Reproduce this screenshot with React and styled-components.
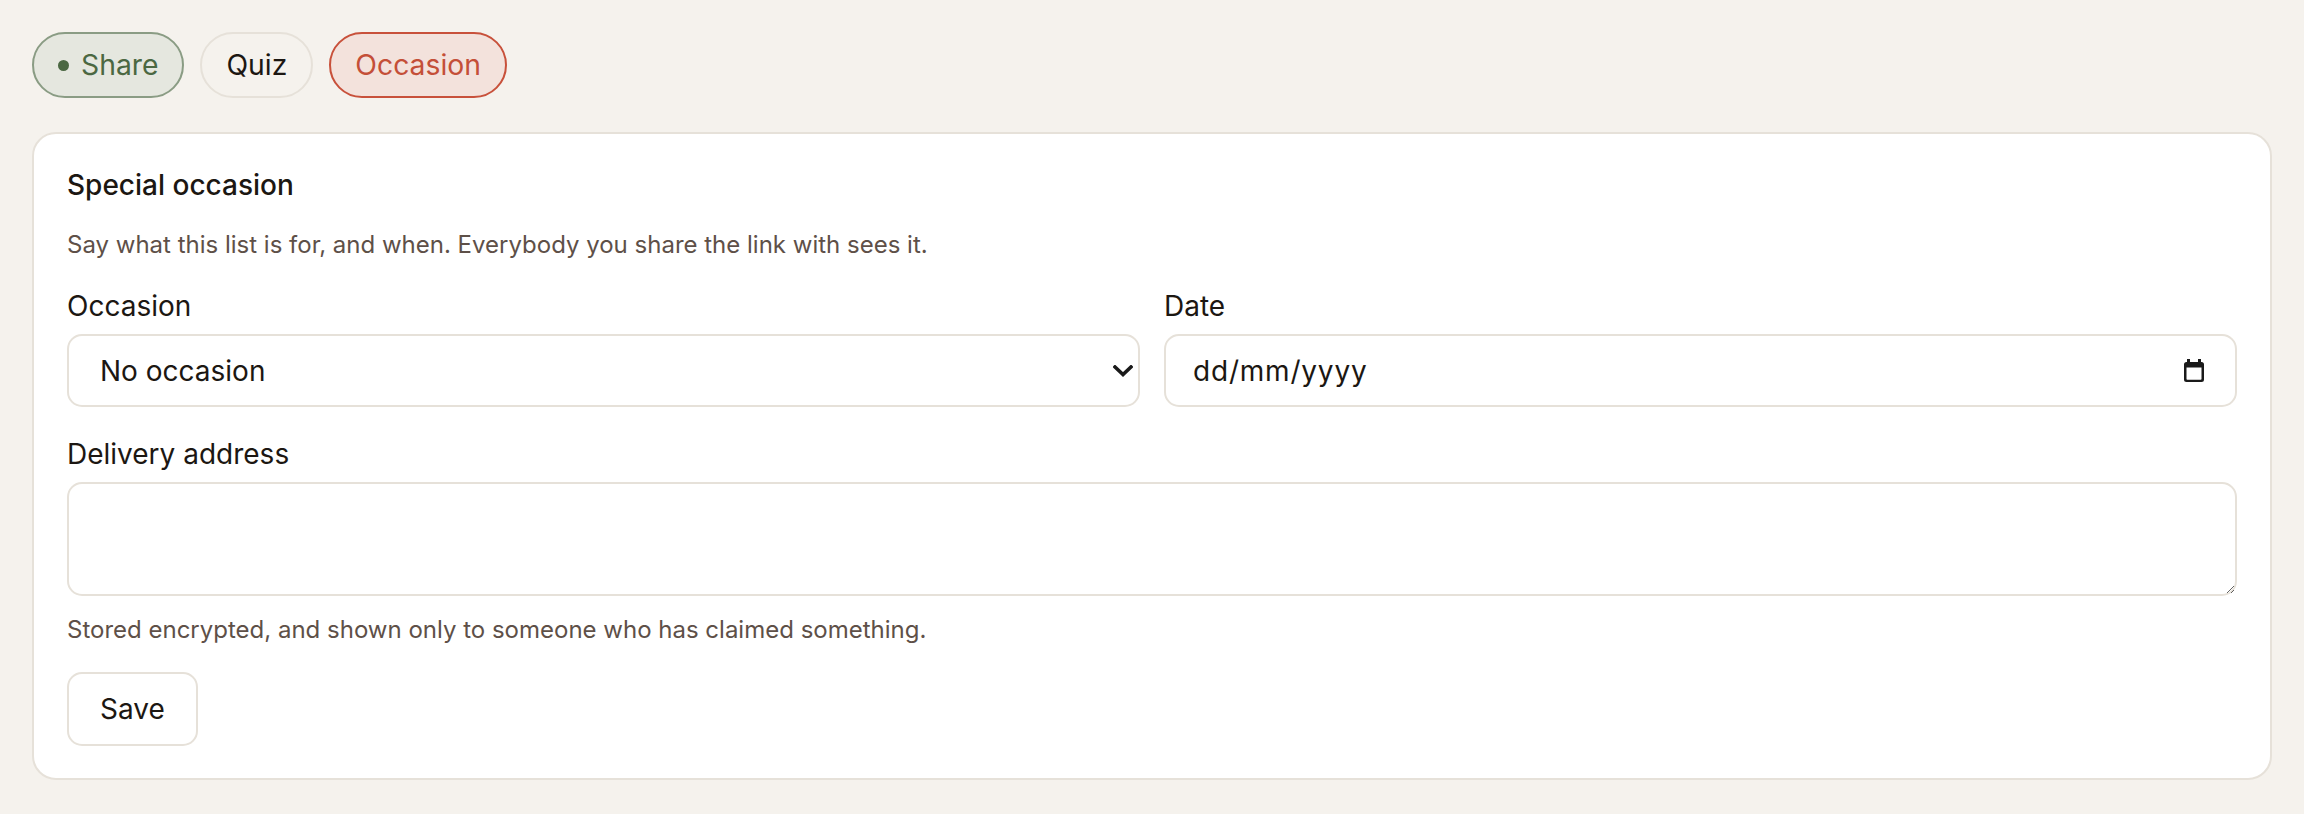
import React, { useState } from "react";
import styled, { createGlobalStyle } from "styled-components";

const GlobalStyle = createGlobalStyle`
  html, body {
    margin: 0;
    padding: 0;
    background: #f5f2ed;
  }
  body {
    font-family: Inter, "Noto Sans", sans-serif;
    color: #1c1712;
  }
  * { box-sizing: border-box; }
`;

const Page = styled.div`
  padding: 32px 32px 33px;
  display: flex;
  flex-direction: column;
  gap: 34px;
`;

const Tabs = styled.nav`
  display: flex;
  gap: 16px;
`;

const tabTones = {
  active: { bg: "#e5e7df", border: "#8a9c84", color: "#4b6842" },
  idle: { bg: "transparent", border: "#e6e1d9", color: "#1c1712" },
  alert: { bg: "#f3e2dc", border: "#c8513b", color: "#c44f38" },
};

const Tab = styled.button`
  height: 66px;
  padding: 0 24px;
  display: inline-flex;
  align-items: center;
  gap: 12px;
  border-radius: 999px;
  border: 2px solid ${(p) => tabTones[p.$tone].border};
  background: ${(p) => tabTones[p.$tone].bg};
  color: ${(p) => tabTones[p.$tone].color};
  font-family: inherit;
  font-size: 28.3px;
  cursor: pointer;
`;

const Dot = styled.span`
  width: 11px;
  height: 11px;
  border-radius: 50%;
  background: currentColor;
`;

const Card = styled.section`
  background: #ffffff;
  border: 2px solid #e6e1d9;
  border-radius: 24px;
  padding: 34px 33px 32px;
  display: flex;
  flex-direction: column;
`;

const Title = styled.h2`
  margin: 0;
  font-size: 28px;
  line-height: 35px;
  font-weight: 500;
`;

const Note = styled.p`
  margin: ${(p) => p.$top || 0}px 0 0;
  font-size: 24px;
  line-height: 34px;
  color: #5e5048;
`;

const FieldGrid = styled.div`
  margin-top: ${(p) => p.$top || 0}px;
  display: grid;
  grid-template-columns: ${(p) => (p.$cols === 2 ? "1fr 1fr" : "1fr")};
  column-gap: 24px;
`;

const Field = styled.label`
  display: flex;
  flex-direction: column;
  gap: 10px;
`;

const LabelText = styled.span`
  font-size: 28px;
  line-height: 35px;
`;

const Control = styled.div`
  position: relative;
  display: flex;
`;

const controlBase = `
  width: 100%;
  height: 73px;
  border: 2px solid #e6e1d9;
  border-radius: 15px;
  background: #ffffff;
  font-family: Inter, "Noto Sans", sans-serif;
  font-size: 28px;
  color: #1c1712;
  outline: none;
`;

const Select = styled.select`
  ${controlBase}
  appearance: none;
  padding: 0 60px 0 31px;
`;

const TextInput = styled.input`
  ${controlBase}
  padding: 0 60px 0 27px;
  letter-spacing: 0.8px;
  &::placeholder {
    color: #1c1712;
    opacity: 1;
  }
`;

const TextArea = styled.textarea`
  ${controlBase}
  height: 114px;
  padding: 18px 27px;
  resize: vertical;
`;

const IconSlot = styled.span`
  position: absolute;
  right: ${(p) => p.$right}px;
  top: 50%;
  transform: translateY(-50%);
  display: flex;
  pointer-events: none;
  color: #1a1a1a;
`;

const SaveButton = styled.button`
  margin-top: 25px;
  align-self: flex-start;
  width: 131px;
  height: 74px;
  border: 2px solid #e6e1d9;
  border-radius: 15px;
  background: #ffffff;
  font-family: inherit;
  font-size: 28px;
  color: #1c1712;
  cursor: pointer;
`;

const Chevron = () => (
  <svg width="20" height="12" viewBox="0 0 20 12" fill="none">
    <path d="M2 2 L10 9.5 L18 2" stroke="currentColor" strokeWidth="3.6" strokeLinecap="square" />
  </svg>
);

const CalendarIcon = () => (
  <svg width="22" height="24" viewBox="0 0 22 24" fill="currentColor">
    <rect x="4" y="0" width="3" height="4" />
    <rect x="15" y="0" width="3" height="4" />
    <path d="M3.5 3h15A2.5 2.5 0 0 1 21 5.5v15a2.5 2.5 0 0 1-2.5 2.5h-15A2.5 2.5 0 0 1 1 20.5v-15A2.5 2.5 0 0 1 3.5 3zM3.5 8.5v11.5a.8.8 0 0 0 .8.8h13.4a.8.8 0 0 0 .8-.8V8.5z" fillRule="evenodd" />
  </svg>
);

export default function App() {
  const [occasion, setOccasion] = useState("none");
  const [date, setDate] = useState("");
  const [address, setAddress] = useState("");

  return (
    <>
      <GlobalStyle />
      <Page>
        <Tabs>
          <Tab $tone="active">
            <Dot />
            Share
          </Tab>
          <Tab $tone="idle">Quiz</Tab>
          <Tab $tone="alert">Occasion</Tab>
        </Tabs>

        <Card>
          <Title>Special occasion</Title>
          <Note $top={25}>
            Say what this list is for, and when. Everybody you share the link with sees it.
          </Note>

          <FieldGrid $cols={2} $top={27}>
            <Field>
              <LabelText>Occasion</LabelText>
              <Control>
                <Select value={occasion} onChange={(e) => setOccasion(e.target.value)}>
                  <option value="none">No occasion</option>
                  <option value="birthday">Birthday</option>
                  <option value="wedding">Wedding</option>
                  <option value="holiday">Holiday</option>
                </Select>
                <IconSlot $right={7}>
                  <Chevron />
                </IconSlot>
              </Control>
            </Field>
            <Field>
              <LabelText>Date</LabelText>
              <Control>
                <TextInput
                  value={date}
                  placeholder="dd/mm/yyyy"
                  onChange={(e) => setDate(e.target.value)}
                />
                <IconSlot $right={32}>
                  <CalendarIcon />
                </IconSlot>
              </Control>
            </Field>
          </FieldGrid>

          <FieldGrid $top={30}>
            <Field>
              <LabelText>Delivery address</LabelText>
              <TextArea value={address} onChange={(e) => setAddress(e.target.value)} />
            </Field>
          </FieldGrid>

          <Note $top={17}>Stored encrypted, and shown only to someone who has claimed something.</Note>

          <SaveButton>Save</SaveButton>
        </Card>
      </Page>
    </>
  );
}
